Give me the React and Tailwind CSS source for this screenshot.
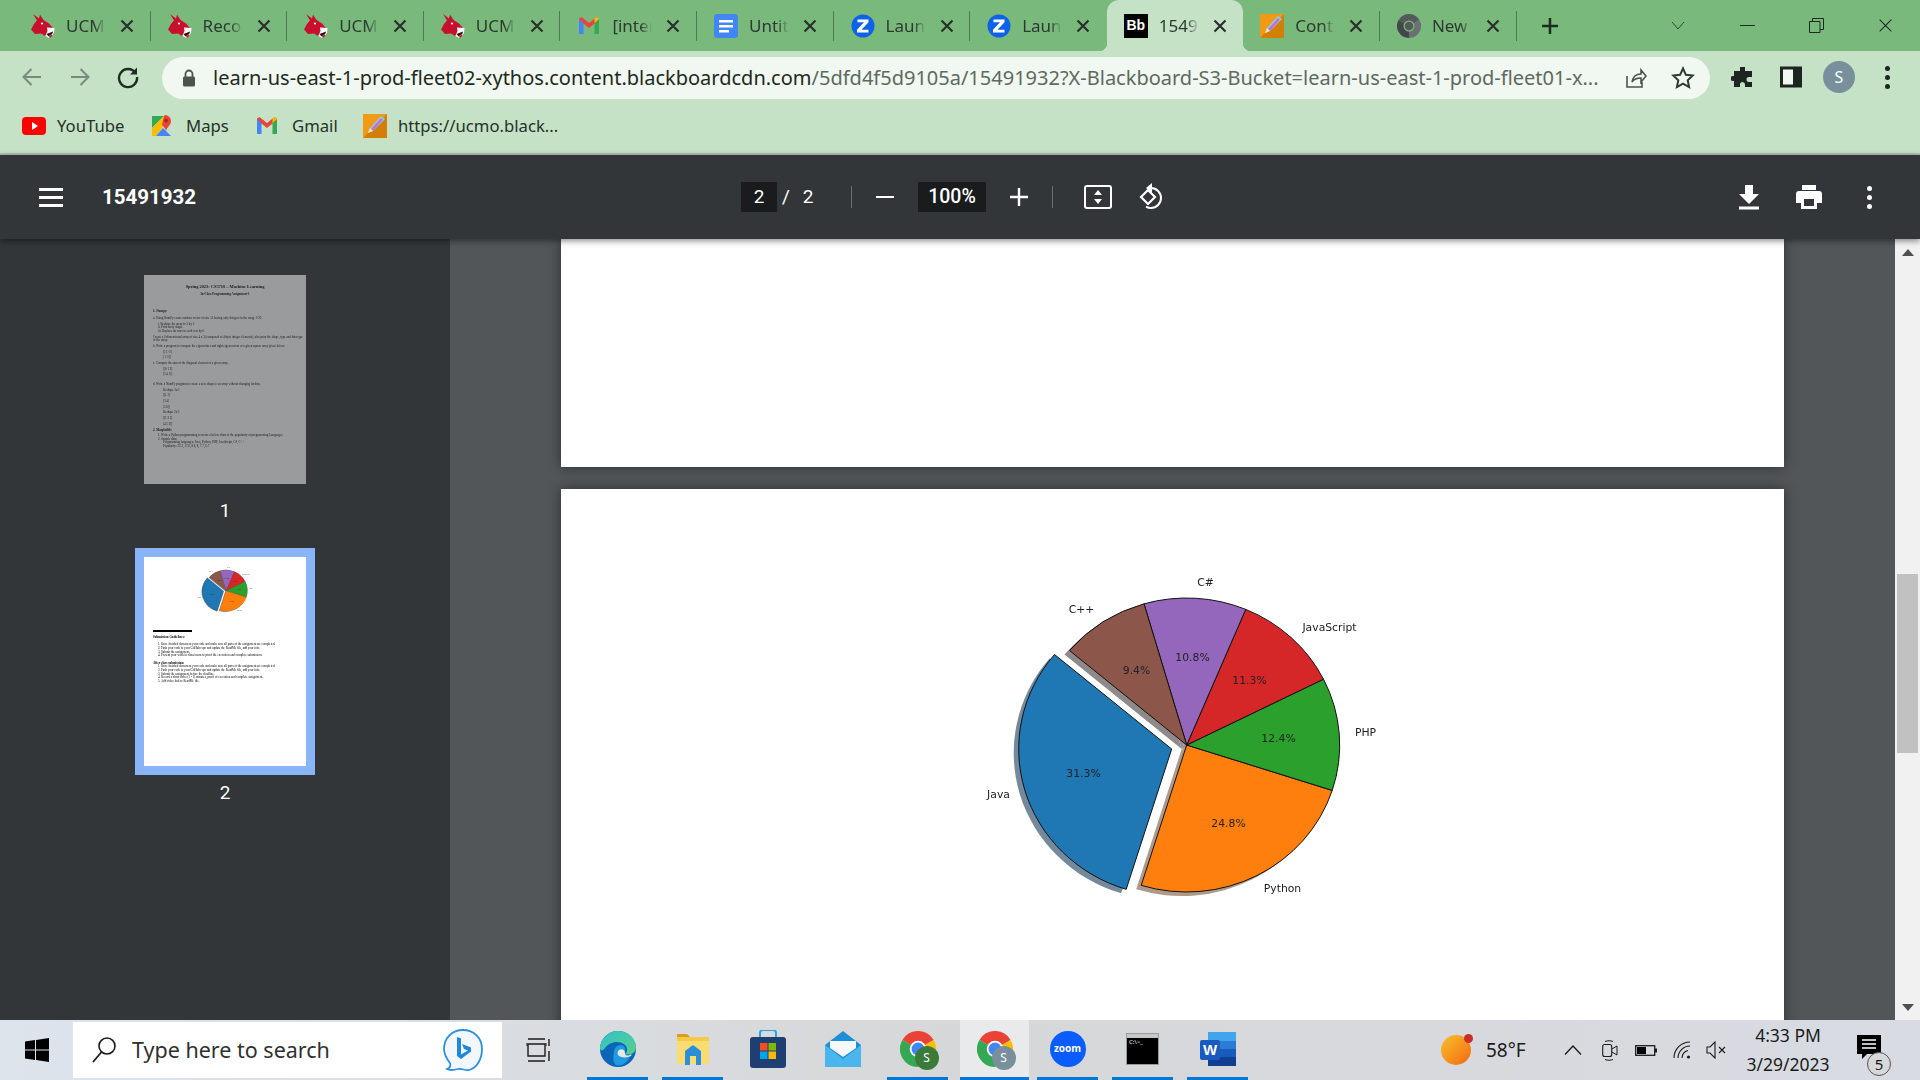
import React from 'react'

const tabs = [
  { icon: 'mule', title: 'UCM' },
  { icon: 'mule', title: 'Recor' },
  { icon: 'mule', title: 'UCM' },
  { icon: 'mule', title: 'UCM' },
  { icon: 'gmail', title: '[inter' },
  { icon: 'docs', title: 'Untitl' },
  { icon: 'zoomz', title: 'Laun' },
  { icon: 'zoomz', title: 'Laun', noSep: true },
  { icon: 'bb', title: '1549', active: true, noSep: true },
  { icon: 'pencil', title: 'Cont' },
  { icon: 'chromeGray', title: 'New' },
]

const wedges = [
  { a0: 140, a1: 252.7, fill: '#1f77b4', shade: '#748a9c', exploded: true },
  { a0: 252.7, a1: 342, fill: '#ff7f0e', shade: '#ad9a8a' },
  { a0: -18, a1: 26.6, fill: '#2ca02c', shade: '#8a9a8a' },
  { a0: 26.6, a1: 67.3, fill: '#d62728', shade: '#9a8a8a' },
  { a0: 67.3, a1: 106.2, fill: '#9467bd', shade: '#948c9a' },
  { a0: 106.2, a1: 140, fill: '#8c564b', shade: '#8f8a89' },
]

const pieLabels = [
  { t: 'Java', x: 38.5, y: 244.5 },
  { t: 'Python', x: 322.5, y: 339 },
  { t: 'PHP', x: 405.5, y: 183 },
  { t: 'JavaScript', x: 369.5, y: 78 },
  { t: 'C#', x: 245.5, y: 33 },
  { t: 'C++', x: 121.5, y: 60 },
  { t: '31.3%', x: 123.5, y: 223.5 },
  { t: '24.8%', x: 268.5, y: 273.5 },
  { t: '12.4%', x: 318.5, y: 189 },
  { t: '11.3%', x: 289.5, y: 130.5 },
  { t: '10.8%', x: 232.5, y: 108 },
  { t: '9.4%', x: 176.5, y: 120.5 },
]

const thumbOneLines = [
  { y: 11.7, t: 'Spring 2023: CS5710 – Machine Learning', kind: 'title' },
  { y: 19, t: 'In-Class Programming Assignment-1', kind: 'sub' },
  { y: 36, x: 9, t: '1. Numpy:', bold: true },
  { y: 42.7, x: 9, t: 'a. Using NumPy create random vector of size 15 having only Integers in the range 1-20.' },
  { y: 48.7, x: 14, t: 'i.   Reshape the array to 3 by 5' },
  { y: 52, x: 14, t: 'ii.  Print array shape.' },
  { y: 55.7, x: 14, t: 'iii. Replace the max in each row by 0' },
  { y: 62, x: 9, t: 'Create a 2-dimensional array of size 4 x 3 (composed of 4-byte integer elements), also print the shape, type and data type' },
  { y: 65, x: 9, t: 'of the array.' },
  { y: 71, x: 9, t: 'b. Write a program to compute the eigenvalues and right eigenvectors of a given square array given below:' },
  { y: 76.7, x: 19, t: '[[ 3 -2]' },
  { y: 82, x: 19, t: '[ 1 0]]' },
  { y: 88, x: 9, t: 'c. Compute the sum of the diagonal element of a given array.' },
  { y: 94, x: 19, t: '[[0 1 2]' },
  { y: 99, x: 19, t: '[3 4 5]]' },
  { y: 108.7, x: 9, t: 'd. Write a NumPy program to create a new shape to an array without changing its data.' },
  { y: 114.7, x: 19, t: 'Reshape 3x2:' },
  { y: 120, x: 19, t: '[[1 2]' },
  { y: 126, x: 19, t: '[3 4]' },
  { y: 131.7, x: 19, t: '[5 6]]' },
  { y: 137, x: 19, t: 'Reshape 2x3:' },
  { y: 143, x: 19, t: '[[1 2 3]' },
  { y: 149, x: 19, t: '[4 5 6]]' },
  { y: 155, x: 9, t: '2. Matplotlib:', bold: true },
  { y: 159.7, x: 14, t: '1.  Write a Python programming to create a below chart of the popularity of programming Languages.' },
  { y: 164, x: 14, t: '2.  Sample data:' },
  { y: 167.3, x: 19, t: 'Programming languages: Java, Python, PHP, JavaScript, C#, C++' },
  { y: 171, x: 19, t: 'Popularity: 22.2, 17.6, 8.8, 8, 7.7, 6.7' },
]

const thumbTwoLines = [
  { y: 80, x: 9, t: 'Submission Guidelines:', bold: true },
  { y: 87, x: 14, t: '1.  Once finished document your code and make sure all parts of the assignment are completed.' },
  { y: 91, x: 14, t: '2.  Push your code to your GitHub repo and update the ReadMe file, add your info.' },
  { y: 95, x: 14, t: '3.  Submit the assignment.' },
  { y: 98, x: 14, t: '4.  Present your work in class/zoom to proof the execution and complete submission.' },
  { y: 106, x: 9, t: 'After class submission:', bold: true },
  { y: 109, x: 14, t: '1.  Once finished document your code and make sure all parts of the assignment are completed.' },
  { y: 113, x: 14, t: '2.  Push your code to your GitHub repo and update the ReadMe file, add your info.' },
  { y: 117, x: 14, t: '3.  Submit the assignment before the deadline.' },
  { y: 120, x: 14, t: '4.  Record a short video (1 - 2) minutes, proof of execution and complete assignment.' },
  { y: 124, x: 14, t: '5.  Add video link to ReadMe file.' },
]

// the pie in the page is slightly squashed, so the wedges are elliptical
function wedgePath(a0, a1, cx, cy) {
  const rx = 153
  const ry = 147
  const rad = (a) => (a * Math.PI) / 180
  const x0 = cx + rx * Math.cos(rad(a0))
  const y0 = cy - ry * Math.sin(rad(a0))
  const x1 = cx + rx * Math.cos(rad(a1))
  const y1 = cy - ry * Math.sin(rad(a1))
  return `M${cx} ${cy}L${x0} ${y0}A${rx} ${ry} 0 0 0 ${x1} ${y1}Z`
}

function PieChart({ className }) {
  const spot = (w) => (w.exploded ? [211.7, 199] : [226.7, 195])
  return (
    <svg viewBox="0 0 440 360" className={className}>
      {wedges.map((w) => {
        const [cx, cy] = spot(w)
        return <path key={w.fill + 's'} d={wedgePath(w.a0, w.a1, cx - 5, cy + 4)} fill={w.shade} />
      })}
      {wedges.map((w) => {
        const [cx, cy] = spot(w)
        return <path key={w.fill} d={wedgePath(w.a0, w.a1, cx, cy)} fill={w.fill} stroke="#111" strokeWidth="1" />
      })}
      {pieLabels.map((l) => (
        <text key={l.t} x={l.x} y={l.y} textAnchor="middle" dominantBaseline="middle" fontSize="10.8" fill="#222" fontFamily="'DejaVu Sans', sans-serif">
          {l.t}
        </text>
      ))}
    </svg>
  )
}

function ThumbLines({ lines, start }) {
  let prev = start
  return lines.map((l) => {
    const top = l.y - 2 - prev
    prev = l.y + 2
    const kind = l.kind === 'title' ? 'text-center text-[4.4px] font-bold' : l.kind === 'sub' ? 'text-center text-[3.1px] font-bold' : l.bold ? 'text-[3.2px] font-bold' : 'text-[3.1px]'
    return (
      <div key={l.y} className={`h-[4px] whitespace-nowrap leading-[4px] text-black ${kind}`} style={{ marginTop: top, marginLeft: l.x || 0 }}>
        {l.t}
      </div>
    )
  })
}

function Mule({ size = 24 }) {
  return (
    <svg width={size} height={size} viewBox="0 0 24 24">
      <path d="M2 0L8 4.500L9 .5L12.500 6L18 9.500L22 14L17 17L14 22L10 19.500L4 20L0 15.500L3 10L6 6.500z" fill="#c8102e" />
      <path d="M16 13.500L23.500 14L23 19L18 24L14.500 22L16.500 17z" fill="#fff" />
      <path d="M15.500 20L22 17.500L21.500 19.500L17.500 22.500z" fill="#3a0a12" />
      <path d="M18 22.500l3-2.500 0 2-2 2z" fill="#c8102e" />
      <circle cx="11" cy="9.500" r="1.100" fill="#fff" />
    </svg>
  )
}

function GmailM({ size = 24 }) {
  return (
    <svg width={size} height={size} viewBox="0 0 24 24">
      <path d="M2 6l10 8 10-8v-1.500L19.500 3 12 9 4.500 3 2 4.500z" fill="#ea4335" />
      <path d="M2 5v15h4.500V9z" fill="#4285f4" />
      <path d="M22 5v15h-4.500V9z" fill="#34a853" />
      <path d="M17.500 9L22 5V4.500L19.500 3l-2 1.600z" fill="#fbbc04" />
    </svg>
  )
}

function Pencil({ size = 24 }) {
  return (
    <svg width={size} height={size} viewBox="0 0 24 24">
      <rect width="24" height="24" fill="#f29a16" />
      <path d="M0 24L24 0v24z" fill="#d37f06" />
      <path d="M5 19l2-5L18 2l4 3L10 17z" fill="#7fd4ea" />
      <path d="M8 15L18 4l2 1.500L10 17z" fill="#c56fd0" />
      <path d="M5 19l2-5 3 3z" fill="#fde3b4" />
    </svg>
  )
}

function Chrome({ size = 24, gray = false }) {
  const red = gray ? '#54595c' : '#ea4335'
  const yel = gray ? '#6b7073' : '#fbbc04'
  const grn = gray ? '#43474a' : '#34a853'
  const mid = gray ? '#54595c' : '#4285f4'
  return (
    <svg width={size} height={size} viewBox="0 0 24 24">
      <path d="M12 12L1.600 6A12 12 0 0 1 22.400 6z" fill={red} />
      <path d="M12 12L22.400 6A12 12 0 0 1 12 24z" fill={yel} />
      <path d="M12 12L12 24A12 12 0 0 1 1.600 6z" fill={grn} />
      <circle cx="12" cy="12" r="5.500" fill={gray ? '#7bb97c' : '#fff'} />
      <circle cx="12" cy="12" r="4.300" fill={mid} />
    </svg>
  )
}

function Favicon({ kind }) {
  if (kind === 'mule') return <Mule />
  if (kind === 'gmail') return <GmailM />
  if (kind === 'pencil') return <Pencil />
  if (kind === 'chromeGray') return <Chrome gray />
  if (kind === 'docs')
    return (
      <svg width="24" height="24" viewBox="0 0 24 24">
        <rect width="24" height="24" rx="3" fill="#4285f4" />
        <path d="M5 6h14v2.500H5zM5 11h14v2.500H5zM5 16h10v2.500H5z" fill="#fff" />
      </svg>
    )
  if (kind === 'zoomz')
    return (
      <svg width="24" height="24" viewBox="0 0 24 24">
        <circle cx="12" cy="12" r="11.500" fill="#0e62e8" />
        <path d="M6.500 5.500h11v2.800l-7 7.500h7v2.700h-11.500v-2.700l7-7.500h-6.500z" fill="#fff" />
      </svg>
    )
  return (
    <div className="flex h-6 w-6 items-center justify-center bg-black text-[14px] font-semibold text-white font-['Liberation_Sans',sans-serif]">Bb</div>
  )
}

function CloseX({ color = '#2a2f2c', size = 14, width = 2.2 }) {
  return (
    <svg width={size} height={size} viewBox="0 0 14 14">
      <path d="M1.500 1.500l11 11M12.500 1.500l-11 11" stroke={color} strokeWidth={width} fill="none" />
    </svg>
  )
}

function Tab({ tab }) {
  return (
    <div className={`relative flex h-[51px] w-[136.6px] shrink-0 items-center ${tab.active ? 'rounded-t-[12px] bg-[#c5e1c6]' : ''}`}>
      {tab.active && (
        <>
          <div className="absolute -left-[8px] bottom-0 h-2 w-2 bg-[radial-gradient(circle_at_0_0,transparent_8px,#c5e1c6_8.5px)]" />
          <div className="absolute -right-[8px] bottom-0 h-2 w-2 bg-[radial-gradient(circle_at_100%_0,transparent_8px,#c5e1c6_8.5px)]" />
        </>
      )}
      <div className="ml-[17px] flex w-6 shrink-0 justify-center">
        <Favicon kind={tab.icon} />
      </div>
      <div className="ml-[11px] w-[40px] shrink-0 overflow-hidden whitespace-nowrap text-[17px] text-[#2c3a30] [mask-image:linear-gradient(to_right,black_70%,transparent)]">
        {tab.title}
      </div>
      <div className="ml-[14px] flex w-[14px] shrink-0 justify-center">
        <CloseX />
      </div>
      {!tab.noSep && <div className="ml-auto h-[30px] w-px bg-[#4f7a52]" />}
    </div>
  )
}

function TabStrip() {
  return (
    <div className="flex h-[51px] shrink-0 items-center bg-[#7ab97c] pl-[14px]">
      {tabs.map((t, i) => (
        <Tab key={i} tab={t} />
      ))}
      <div className="ml-[23px] flex w-[20px] justify-center">
        <svg width="20" height="20" viewBox="0 0 20 20">
          <path d="M10 2v16M2 10h16" stroke="#1f2a22" strokeWidth="2.500" />
        </svg>
      </div>
      <div className="ml-[111px] flex w-[14px] justify-center">
        <svg width="14" height="9" viewBox="0 0 14 9">
          <path d="M1 1l6 7 6-7" stroke="#33493a" strokeWidth="1" fill="none" />
        </svg>
      </div>
      <div className="ml-[55px] h-px w-[15px] bg-[#1c2a20]" />
      <div className="ml-[54px] flex w-[15px] justify-center">
        <svg width="15" height="15" viewBox="0 0 15 15">
          <path d="M.5 3.500h10.500v11H.5z M3.500 3.500v-3h11v11h-3.500" stroke="#1c2a20" fill="none" />
        </svg>
      </div>
      <div className="ml-[54px] flex w-[15px] justify-center">
        <CloseX color="#1c2a20" size={15} width={1} />
      </div>
    </div>
  )
}

function AddressBar() {
  return (
    <div className="flex h-[51px] shrink-0 items-start bg-[#c5e1c6] pl-[8px]">
      <div className="flex h-[52px] w-[48px] items-center justify-center">
        <svg width="22" height="22" viewBox="0 0 22 22">
          <path d="M20 11H3M10.500 3L2.500 11l8 8" stroke="#7b8a7e" strokeWidth="2" fill="none" />
        </svg>
      </div>
      <div className="flex h-[52px] w-[48px] items-center justify-center">
        <svg width="22" height="22" viewBox="0 0 22 22">
          <path d="M2 11h17M11.500 3l8 8-8 8" stroke="#7b8a7e" strokeWidth="2" fill="none" />
        </svg>
      </div>
      <div className="flex h-[52px] w-[48px] items-center justify-center">
        <svg width="24" height="24" viewBox="0 0 24 24">
          <path d="M19.500 8A9 9 0 1 0 21 12" stroke="#202b24" strokeWidth="2.400" fill="none" />
          <path d="M21 2.500V9.500H14z" fill="#202b24" />
        </svg>
      </div>
      <div className="ml-[10px] mt-[6px] flex h-[42px] w-[1548px] items-center rounded-full bg-[#f1f7f1] pl-[20px] text-[#5d6a60]">
        <svg width="14" height="18" viewBox="0 0 14 18" className="shrink-0">
          <path d="M3.500 8V5a3.500 3.500 0 0 1 7 0v3" stroke="#4a554d" strokeWidth="1.800" fill="none" />
          <rect x="1" y="7.500" width="12" height="10" rx="1.500" fill="#4a554d" />
        </svg>
        <div className="ml-[17px] w-[1395px] shrink-0 overflow-hidden whitespace-nowrap text-[20px] leading-[42px]">
          <span className="text-[#1d2a20]">learn-us-east-1-prod-fleet02-xythos.content.blackboardcdn.com</span>
          /5dfd4f5d9105a/15491932?X-Blackboard-S3-Bucket=learn-us-east-1-prod-fleet01-x...
        </div>
        <div className="ml-[15px] flex w-[24px] justify-center">
          <svg width="24" height="24" viewBox="0 0 24 24">
            <path d="M4 10v11h15v-5M9 16c1-6 5-8 9-8V4l5 6-5 6v-4c-4 0-7 1-9 4z" stroke="#4a554d" strokeWidth="1.600" fill="none" />
          </svg>
        </div>
        <div className="ml-[24px] flex w-[24px] justify-center">
          <svg width="24" height="24" viewBox="0 0 24 24">
            <path d="M12 2.500l2.900 6.300 6.800.8-5 4.700 1.400 6.800L12 17.700l-6.100 3.400 1.400-6.800-5-4.700 6.800-.8z" stroke="#2f3a33" strokeWidth="2" fill="none" />
          </svg>
        </div>
      </div>
      <div className="ml-[9px] flex h-[52px] w-[48px] items-center justify-center">
        <svg width="24" height="24" viewBox="0 0 24 24">
          <path d="M9 2h5v4h7v6h-3a2.500 2.500 0 0 0 0 5h3v5H14v-2.500a2.500 2.500 0 0 0-5 0V22H3v-6h-1a2.500 2.500 0 0 1 0-5h1V6h6z" fill="#1c2520" />
        </svg>
      </div>
      <div className="flex h-[52px] w-[48px] items-center justify-center">
        <svg width="22" height="22" viewBox="0 0 22 22">
          <rect x="1.500" y="2" width="19" height="18" fill="#f1f7f1" stroke="#1c2520" strokeWidth="3" />
          <rect x="13" y="2" width="7" height="18" fill="#1c2520" />
        </svg>
      </div>
      <div className="flex h-[52px] w-[48px] items-center justify-center">
        <div className="flex h-[32px] w-[32px] items-center justify-center rounded-full bg-[#78909c] text-[16px] text-white">S</div>
      </div>
      <div className="flex h-[52px] w-[48px] flex-col items-center justify-center gap-[4px]">
        <div className="h-[5px] w-[5px] rounded-full bg-[#1c2520]" />
        <div className="h-[5px] w-[5px] rounded-full bg-[#1c2520]" />
        <div className="h-[5px] w-[5px] rounded-full bg-[#1c2520]" />
      </div>
    </div>
  )
}

function BookmarksBar() {
  return (
    <div className="flex h-[53px] shrink-0 items-center border-b-2 border-[#aebfaf] bg-[#c5e1c6] pb-[3px] pl-[22px] text-[16.7px] text-[#27322a]">
      <div className="flex w-[129px] items-center gap-[11px]">
        <svg width="24" height="24" viewBox="0 0 24 24">
          <rect y="3" width="24" height="18" rx="4" fill="#f00" />
          <path d="M10 8l6 4-6 4z" fill="#fff" />
        </svg>
        <span>YouTube</span>
      </div>
      <div className="flex w-[104px] items-center gap-[13px]">
        <svg width="22" height="24" viewBox="0 0 22 24">
          <path d="M1 2h12L1 14z" fill="#34a853" />
          <path d="M1 14L13 2l4 4L5 22H1z" fill="#fbbc04" />
          <path d="M5 22l7-8 8 8z" fill="#4285f4" />
          <path d="M14 1a6 6 0 0 1 6 6c0 4-4 6-5 10-1-3-2-4-4-6l2-9z" fill="#ea4335" />
          <circle cx="15" cy="6.500" r="2" fill="#a82a20" />
        </svg>
        <span>Maps</span>
      </div>
      <div className="flex w-[108px] items-center gap-[13px]">
        <GmailM />
        <span>Gmail</span>
      </div>
      <div className="flex items-center gap-[11px]">
        <Pencil />
        <span>https://ucmo.black...</span>
      </div>
    </div>
  )
}

function ViewerToolbar() {
  return (
    <div className="relative z-10 flex h-[84px] shrink-0 items-center bg-[#323639] pl-[39px] text-white shadow-[0_2px_6px_rgba(0,0,0,0.45)] font-['Roboto',sans-serif]">
      <div className="flex w-[24px] flex-col gap-[5px]">
        <div className="h-[3px] w-[24px] bg-white" />
        <div className="h-[3px] w-[24px] bg-white" />
        <div className="h-[3px] w-[24px] bg-white" />
      </div>
      <div className="ml-[39px] w-[639px] text-[20.5px] font-bold">15491932</div>
      <div className="flex h-[30px] w-[36px] items-center justify-center bg-[#191b1c] text-[19px]">2</div>
      <div className="w-[18px] text-center text-[19px]">/</div>
      <div className="w-[26px] text-center text-[19px]">2</div>
      <div className="ml-[30px] h-[22px] w-px bg-[#6b6f72]" />
      <div className="flex w-[66px] justify-center">
        <div className="h-[2.500px] w-[18px] bg-white" />
      </div>
      <div className="flex h-[30px] w-[68px] items-center justify-center bg-[#191b1c] text-[19.500px] font-medium">100%</div>
      <div className="flex w-[66px] justify-center">
        <svg width="18" height="18" viewBox="0 0 18 18">
          <path d="M9 0v18M0 9h18" stroke="#fff" strokeWidth="2.400" />
        </svg>
      </div>
      <div className="h-[22px] w-px bg-[#6b6f72]" />
      <div className="flex w-[90px] justify-center">
        <svg width="28" height="24" viewBox="0 0 28 24">
          <rect x="1" y="1" width="26" height="22" rx="2" stroke="#fff" strokeWidth="2" fill="none" />
          <path d="M14 5l4 5h-8zM14 19l4-5h-8z" fill="#fff" />
        </svg>
      </div>
      <div className="flex w-[18px] justify-center">
        <svg width="28" height="30" viewBox="0 0 28 30" className="shrink-0">
          <path d="M3 15l7-7 7 7-7 7z" stroke="#fff" strokeWidth="2.200" fill="none" />
          <path d="M13 6a10 10 0 1 1 0 20 10 10 0 0 1-5-1.400" stroke="#fff" strokeWidth="2" fill="none" />
          <path d="M14 1v10l-6-5z" fill="#fff" />
        </svg>
      </div>
      <div className="ml-[558px] flex w-[60px] justify-center">
        <svg width="22" height="26" viewBox="0 0 22 26">
          <path d="M7 1h8v9h6L11 20 1 10h6z" fill="#fff" />
          <rect x="1" y="22.500" width="20" height="3" fill="#fff" />
        </svg>
      </div>
      <div className="flex w-[60px] justify-center">
        <svg width="26" height="24" viewBox="0 0 26 24">
          <path d="M6 0h14v5H6z" fill="#fff" />
          <path d="M3 6h20a3 3 0 0 1 3 3v9h-5v6H5v-6H0V9a3 3 0 0 1 3-3z" fill="#fff" />
          <rect x="8" y="14" width="10" height="7" fill="#323639" />
        </svg>
      </div>
      <div className="flex w-[60px] flex-col items-center gap-[4px]">
        <div className="h-[5px] w-[5px] rounded-full bg-white" />
        <div className="h-[5px] w-[5px] rounded-full bg-white" />
        <div className="h-[5px] w-[5px] rounded-full bg-white" />
      </div>
    </div>
  )
}

function Sidebar() {
  return (
    <div className="w-[450px] shrink-0 overflow-hidden bg-[#323639] pl-[135px] pt-[27px] text-white font-['Roboto',sans-serif]">
      <div className="w-[180px]">
        <div className="p-[9px]">
          <div className="h-[209px] w-[162px] overflow-hidden bg-white font-['Liberation_Serif',serif] opacity-50 blur-[0.3px]">
            <ThumbLines lines={thumbOneLines} start={0} />
          </div>
        </div>
        <div className="h-[55px] pt-[6px] text-center text-[19px] leading-[24px]">1</div>
        <div className="border-[9px] border-[#8ab4f8]">
          <div className="h-[209px] w-[162px] overflow-hidden bg-white font-['Liberation_Serif',serif] blur-[0.3px]">
            <PieChart className="ml-[50px] mt-[6px] block h-[51px] w-[62px]" />
            <div className="ml-[9px] mt-[16px] h-[1.500px] w-[39px] bg-black" />
            <ThumbLines lines={thumbTwoLines} start={74.500} />
          </div>
        </div>
        <div className="h-[55px] pt-[6px] text-center text-[19px] leading-[24px]">2</div>
      </div>
    </div>
  )
}

function PdfPages() {
  return (
    <div className="min-w-0 flex-1 overflow-hidden bg-[#525659] pl-[111px]">
      <div className="h-[228px] w-[1223px] bg-white shadow-[0_0_12px_rgba(0,0,0,0.45)]" />
      <div className="mt-[22px] h-[600px] w-[1223px] bg-white pl-[399px] pt-[61px] shadow-[0_0_12px_rgba(0,0,0,0.45)]">
        <PieChart className="block h-[360px] w-[440px] blur-[0.35px]" />
      </div>
    </div>
  )
}

function Scrollbar() {
  return (
    <div className="flex w-[25px] shrink-0 flex-col items-center bg-[#f1f1f1]">
      <svg width="12" height="7" viewBox="0 0 12 7" className="mt-[10px] shrink-0">
        <path d="M0 7L6 0l6 7z" fill="#505050" />
      </svg>
      <div className="mt-[318px] h-[179px] w-[21px] shrink-0 bg-[#c1c1c1]" />
      <svg width="12" height="7" viewBox="0 0 12 7" className="mt-auto mb-[9px] shrink-0">
        <path d="M0 0l6 7 6-7z" fill="#505050" />
      </svg>
    </div>
  )
}

function TaskSlot({ line, active, width = 'w-[61px]', gap = 'mr-[14px]', children }) {
  return (
    <div className={`flex h-[60px] flex-col ${width} ${gap} ${active ? 'bg-[#e9eaeb]' : ''}`}>
      <div className="flex flex-1 items-center justify-center">{children}</div>
      <div className={`h-[3px] ${line ? 'bg-[#0078d4]' : ''}`} />
    </div>
  )
}

function ChromeBadge({ bg }) {
  return (
    <div className="relative h-[36px] w-[36px]">
      <Chrome size={36} />
      <div className={`absolute -bottom-[3px] -right-[3px] flex h-[24px] w-[24px] items-center justify-center rounded-full text-[12px] text-white ${bg}`}>S</div>
    </div>
  )
}

function Taskbar() {
  return (
    <div className="flex h-[60px] shrink-0 items-center bg-gradient-to-r from-[#dde4ec] via-[#d6d7d8] to-[#d8dbe2] text-[#1b1b1b]">
      <div className="flex w-[73px] justify-center">
        <svg width="24" height="24" viewBox="0 0 24 24">
          <path d="M0 3.500l10-1.400V11.500H0zM11 2l13-2v11.500H11zM0 12.500h10V22L0 20.500zM11 12.500h13V24l-13-2z" fill="#000" />
        </svg>
      </div>
      <div className="flex h-[56px] w-[429px] items-center bg-white pl-[18px]">
        <svg width="26" height="28" viewBox="0 0 26 28" className="shrink-0">
          <circle cx="16" cy="10" r="8" stroke="#1b1b1b" strokeWidth="1.600" fill="none" />
          <path d="M10.500 16L2 26" stroke="#1b1b1b" strokeWidth="1.800" />
        </svg>
        <span className="ml-[15px] w-[310px] text-[21.500px] text-[#303030]">Type here to search</span>
        <svg width="42" height="44" viewBox="0 0 42 44" className="shrink-0">
          <path d="M21 2c11 0 19 8 19 19 0 10-5 19-13 21-4 1-7-2-11-1-4 1-8 2-11 0 3-1 4-3 3-6C4 30 2 26 2 21 2 10 10 2 21 2z" fill="#f2f6fd" stroke="#2a8fe0" strokeWidth="1.800" />
          <path d="M15 9l4 1.500v16l7-4-4-1.500-2-5 9 3.500v4L19 31l-4-3z" fill="#1e88d9" />
        </svg>
      </div>
      <div className="flex w-[85px] justify-center pr-[12px]">
        <svg width="26" height="24" viewBox="0 0 26 24">
          <path d="M2 1h17M2 23h17M2 6h17v12H2zM23 1v7M23 13v10" stroke="#1b1b1b" strokeWidth="1.400" fill="none" />
          <path d="M1 5v3M20 5v3" stroke="#1b1b1b" />
        </svg>
      </div>
      <TaskSlot line>
        <svg width="38" height="38" viewBox="0 0 38 38">
          <defs>
            <linearGradient id="edgeA" x1="0" y1="0" x2="1" y2="1">
              <stop offset="0" stopColor="#35c1c9" />
              <stop offset="1" stopColor="#55d08a" />
            </linearGradient>
          </defs>
          <circle cx="19" cy="19" r="18" fill="#0c66b8" />
          <path d="M1 19C1 8 10 1 19 1c11 0 18 8 18 16 0 6-6 9-11 7 3-2 3-7-1-10-6-4-15-2-19 4-2 3-4 3-5 1z" fill="url(#edgeA)" />
          <path d="M15 22c0-4 3-7 7-7 3 0 5 3 4 7-1 3 3 4 5 3-1 7-9 12-14 10-3-2-3-8-2-13z" fill="#1f9ae0" />
          <path d="M20 20c3-2 6 0 6 3s3 3 5 2c1-1 2 0 1 1-4 2-11 2-13-1-1-2 0-4 1-5z" fill="#e6e8ea" />
        </svg>
      </TaskSlot>
      <TaskSlot line>
        <svg width="36" height="34" viewBox="0 0 36 34">
          <path d="M2 2h10l3 3h19v27H2z" fill="#f7c948" />
          <path d="M2 2h10l3 3H2z" fill="#d99f1c" />
          <path d="M2 9h32v23H2z" fill="#fbdc73" />
          <path d="M10 33V19l8-6 8 6v14h-5v-9h-6v9z" fill="#2a8fd8" />
        </svg>
      </TaskSlot>
      <TaskSlot>
        <svg width="36" height="38" viewBox="0 0 36 38">
          <path d="M10 8V3a3 3 0 0 1 3-3h10a3 3 0 0 1 3 3v5" stroke="#2aa3e0" strokeWidth="2" fill="none" />
          <rect y="7" width="36" height="31" rx="3" fill="#1f3f73" />
          <path d="M10 13h7.500v7.500H10z" fill="#f25022" />
          <path d="M18.500 13H26v7.500h-7.500z" fill="#7fba00" />
          <path d="M10 21.500h7.500V29H10z" fill="#00a4ef" />
          <path d="M18.500 21.500H26V29h-7.500z" fill="#ffb900" />
        </svg>
      </TaskSlot>
      <TaskSlot>
        <svg width="36" height="36" viewBox="0 0 36 36">
          <path d="M18 0L36 14v22H0V14z" fill="#1d8fd6" />
          <path d="M0 14l18 14 18-14v22H0z" fill="#49b6ee" />
          <path d="M5 10h26v7L18 26 5 17z" fill="#f4f8fc" />
        </svg>
      </TaskSlot>
      <TaskSlot line width="w-[61px]" gap="mr-[12px]">
        <ChromeBadge bg="bg-[#3c7a3c]" />
      </TaskSlot>
      <TaskSlot line active width="w-[69px]" gap="mr-[8px]">
        <ChromeBadge bg="bg-[#78909c]" />
      </TaskSlot>
      <TaskSlot line>
        <div className="flex h-[36px] w-[36px] items-center justify-center rounded-full bg-[#0b5cff] text-[10px] font-bold text-white">zoom</div>
      </TaskSlot>
      <TaskSlot line>
        <div className="h-[32px] w-[33px] border border-[#9a9a9a] bg-[#c8c8c8] pt-[4px]">
          <div className="h-[26px] bg-black pl-[2px] pt-[1px] text-[6px] leading-[7px] text-white">C:\&gt;_</div>
        </div>
      </TaskSlot>
      <TaskSlot line gap="mr-0">
        <svg width="36" height="36" viewBox="0 0 36 36">
          <rect x="8" y="1" width="28" height="34" rx="2" fill="#2b7cd3" />
          <rect x="8" y="1" width="28" height="9" fill="#41a5ee" />
          <rect x="8" y="18" width="28" height="8" fill="#185abd" />
          <rect x="8" y="26" width="28" height="9" fill="#103f91" />
          <rect y="9" width="20" height="20" rx="2" fill="#185abd" />
          <text x="10" y="24" textAnchor="middle" fontSize="15" fontWeight="700" fill="#fff" fontFamily="'Liberation Sans', sans-serif">W</text>
        </svg>
      </TaskSlot>
      <div className="relative ml-[193px] h-[30px] w-[30px] rounded-full bg-gradient-to-br from-[#f5c02c] to-[#f2650f]">
        <div className="absolute -right-[2px] -top-[1px] h-[9px] w-[9px] rounded-full bg-[#c9302c]" />
      </div>
      <span className="ml-[15px] w-[40px] text-[19px]">58°F</span>
      <div className="ml-[38px] flex w-[18px] justify-center">
        <svg width="18" height="10" viewBox="0 0 18 10">
          <path d="M1 9.500L9 1l8 8.500" stroke="#1b1b1b" strokeWidth="1.300" fill="none" />
        </svg>
      </div>
      <div className="ml-[20px] flex w-[16px] justify-center">
        <svg width="16" height="21" viewBox="0 0 16 21">
          <rect x=".7" y="4.500" width="9" height="12" rx="2" stroke="#1b1b1b" strokeWidth="1.100" fill="none" />
          <path d="M10 9l5-3v9l-5-3M3 1.500c3-1 5-1 8 0M3 19.500c3 1 5 1 8 0" stroke="#1b1b1b" fill="none" />
        </svg>
      </div>
      <div className="ml-[17px] flex w-[22px] justify-center">
        <svg width="22" height="11" viewBox="0 0 22 11">
          <rect x=".7" y=".7" width="19" height="9.600" stroke="#1b1b1b" strokeWidth="1.300" fill="none" />
          <rect x="2" y="2" width="9" height="7" fill="#000" />
          <rect x="20" y="3.500" width="2" height="4" fill="#1b1b1b" />
        </svg>
      </div>
      <div className="ml-[16px] flex w-[18px] justify-center">
        <svg width="18" height="18" viewBox="0 0 18 18">
          <path d="M1 17A16 16 0 0 1 17 1M5 17A12 12 0 0 1 17 5M9 17a8 8 0 0 1 6-7.500" stroke="#1b1b1b" strokeWidth="1.100" fill="none" />
          <circle cx="15.500" cy="16" r="1.600" fill="#1b1b1b" />
        </svg>
      </div>
      <div className="ml-[15px] flex w-[20px] justify-center">
        <svg width="20" height="18" viewBox="0 0 20 18">
          <path d="M1 6h3l5-5v16l-5-5H1z M13 6l6 6M19 6l-6 6" stroke="#1b1b1b" strokeWidth="1.100" fill="none" />
        </svg>
      </div>
      <div className="ml-[12px] w-[100px] text-center text-[17.5px] leading-[29px]">
        <div>4:33 PM</div>
        <div>3/29/2023</div>
      </div>
      <div className="relative ml-[18px] h-[44px] w-[34px]">
        <svg width="26" height="26" viewBox="0 0 26 26" className="absolute left-0 top-[6px]">
          <path d="M1 1h24v19H11l-5 5v-5H1z" fill="#000" />
          <path d="M6 6h14M6 10h14M6 14h14" stroke="#fff" strokeWidth="1.300" />
        </svg>
        <div className="absolute bottom-[-4px] left-[11px] flex h-[24px] w-[24px] items-center justify-center rounded-full border border-[#555] bg-[#d6d8da] text-[15px]">5</div>
      </div>
    </div>
  )
}

export default function App() {
  return (
    <div className="flex h-[1080px] w-[1920px] flex-col overflow-hidden font-['Noto_Sans',sans-serif]">
      <TabStrip />
      <AddressBar />
      <BookmarksBar />
      <ViewerToolbar />
      <div className="flex min-h-0 flex-1">
        <Sidebar />
        <PdfPages />
        <Scrollbar />
      </div>
      <Taskbar />
    </div>
  )
}
